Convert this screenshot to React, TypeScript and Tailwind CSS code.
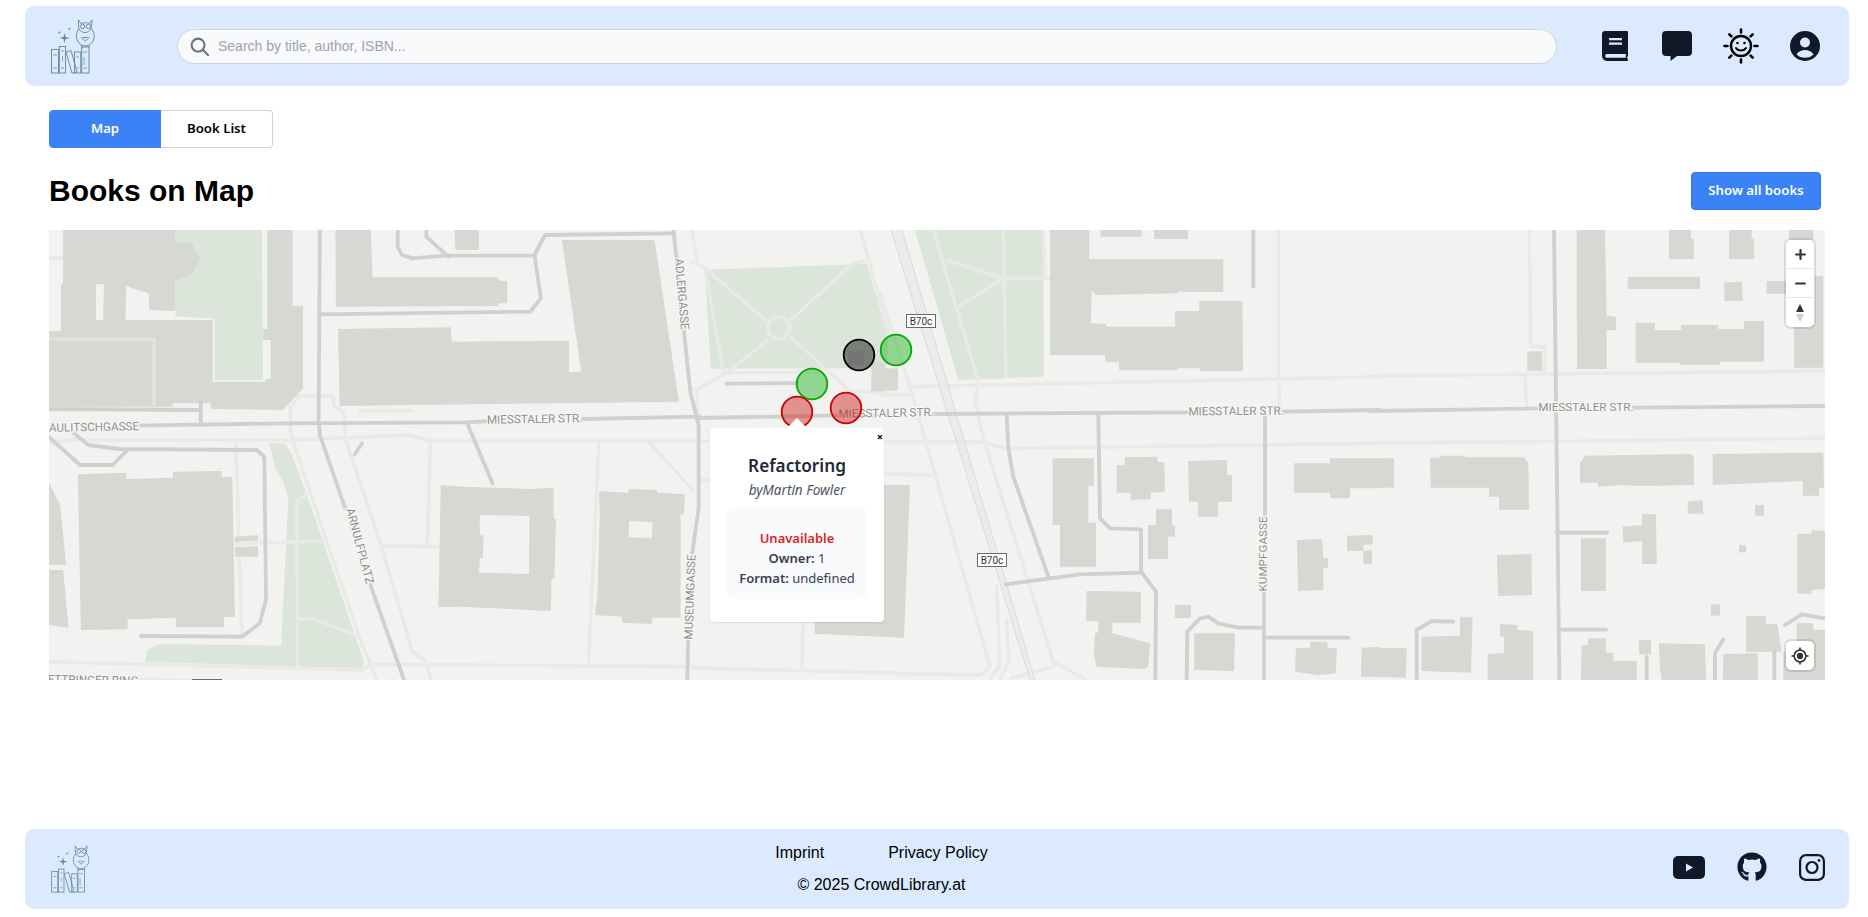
import React from 'react';
import { Plus, Minus } from 'lucide-react';
import { FaGithub } from 'react-icons/fa';

type MapFrame = {
  t: string;
  parks?: string[];
  minor?: string[];
  major?: string[];
  buildings?: string[];
  holes?: string[];
};

// every frame is a part of the map, traced at its own scale
const frames: MapFrame[] = [
  {
    t: 'matrix(0.42088 0 0 0.33333 40 225)',
    parks: [
      '322,15 527,15 530,465 415,465 415,280 322,275',
      '545,655 582,655 597,685 640,830 770,1310 765,1328 610,1325 250,1310 255,1275 285,1257 573,1262 590,820 578,770 560,735',
    ],
    minor: [
      '20,100 55,100',
      '600,540 615,512 695,512 700,545 722,560 725,640 810,960 885,1280 915,1305 930,1365',
      '595,540 595,620 620,720 760,1240 800,1365',
      '20,655 70,645 600,645 875,630 925,648 1568,648',
      '928,648 920,965',
      '808,962 950,965',
      '455,957 680,948',
      '465,650 480,1230',
      '635,805 610,830 612,1330',
      '615,1182 650,1182 755,1235',
      '20,1310 600,1330 765,1335 785,1318 1568,1325',
      '1328,650 1303,1315',
      '1445,650 1555,800',
      '755,557 885,557',
      '230,1362 360,1368',
    ],
    major: [
      '225,602 580,595 1010,592 1070,588',
      '1290,582 1568,575',
      '20,552 380,555',
      '382,530 382,600',
      '665,15 662,580 665,630 725,850',
      '785,1080 865,1365',
      '665,268 1165,260 1190,220 1175,90 1200,30 1505,25',
      '850,15 850,65 860,90 885,100 960,92 1175,92',
      '918,15 918,35 970,95',
      '1505,15 1530,320',
      '1530,320 1545,500 1565,600 1565,850 1548,1000',
      '1540,1240 1538,1365',
      '1015,595 1075,775',
      '80,625 115,660 190,672 515,675 533,695 537,1125 522,1195 480,1235 240,1233',
      '20,635 95,720 172,720 208,675',
      '765,655 748,688',
    ],
    buildings: [
      '55,15 322,15 322,55 360,55 380,100 360,150 322,165 322,258 260,255 258,205 220,190 205,180 203,285 150,285 152,178 133,178 133,285 50,285 50,178 55,178',
      '20,318 50,318 50,285 410,285 410,470 537,470 537,462 548,462 548,345 530,345 530,312 540,312 540,15 600,15 600,242 625,242 625,490 578,555 405,552 405,535 315,535 315,545 20,545',
      '702,15 786,15 790,157 1088,157 1088,165 1110,170 1110,235 1088,235 1088,243 703,245',
      '1240,45 1460,45 1518,530 712,543 708,312 976,307 978,350 1257,348 1257,442 1286,440',
      '985,15 1043,15 1043,75 987,75',
      '90,748 205,743 205,762 316,758 316,740 432,738 432,756 457,756 463,1175 437,1177 437,1207 323,1207 323,1178 208,1183 208,1213 97,1215',
      '20,770 48,840 62,1020 20,1020',
      '20,1035 55,1035 68,1208 20,1200',
      '463,935 518,930 518,947 463,950',
      '463,966 518,964 518,995 463,995',
      '952,780 1005,785 1168,792 1220,788 1220,882 1226,882 1222,1060 1215,1062 1214,1158 1160,1155 1000,1145 946,1146 948,1080',
      '1328,798 1398,803 1398,792 1466,795 1466,803 1532,808 1530,868 1522,868 1522,1178 1455,1178 1453,1197 1383,1193 1383,1175 1318,1170 1325,1105 1330,860',
    ],
    holes: [
      '1045,870 1163,873 1162,1047 1043,1043 1045,1000 1052,1000 1054,932 1045,930',
      '1400,888 1455,892 1454,940 1398,937',
    ],
  },
  {
    t: 'matrix(0.33333 0 0 0.33333 690 228)',
    parks: ['45,125 530,108 595,330 590,420 62,422'],
    minor: [
      '0,100 40,115 230,280',
      '300,278 490,105 530,98',
      '300,325 480,490 600,495',
      '235,335 110,435 20,485 0,480',
      '45,120 100,435 400,432',
      '5,0 22,100',
      '510,0 600,330',
      '20,485 25,600',
    ],
    major: ['110,467 320,465', '20,570 450,562'],
    buildings: ['544,403 583,403 583,490 544,490', '474,366 524,366 524,411 474,411'],
  },
  {
    t: 'matrix(0.33333 0 0 0.33333 880 225)',
    parks: ['105,15 490,15 492,455 235,465'],
    minor: [
      '160,15 295,470 285,530 310,640 520,1310 620,1365',
      '370,15 378,460',
      '200,105 370,160 510,160',
      '235,245 370,160',
      '490,15 495,155',
      '90,485 1500,455',
      '0,650 300,650 380,670 1500,655',
      '1195,15 1195,460 1200,545',
      '0,200 90,485 330,1325 300,1350 0,1345',
      '20,745 155,750',
      '0,510 90,510',
      '525,1325 390,1360',
      '350,1080 360,1320 330,1365',
      '380,1180 385,1310 360,1365',
    ],
    major: [
      '160,567 925,562',
      '1210,560 1500,555',
      '380,567 385,670 400,755 505,1055',
      '655,567 660,880 690,910 783,913 783,1040 828,1100 826,1365',
      '378,1078 600,1048 783,1043',
      '1155,575 1155,875',
      '1152,1100 1152,1365',
      '1120,15 1120,185',
      '1152,1238 1405,1238',
      '920,1365 922,1220 960,1180 985,1175 1015,1195 1075,1208 1150,1208',
    ],
    buildings: [
      '510,15 628,15 628,102 1030,102 1030,200 895,200 895,205 648,210 635,195 633,295 678,297 678,305 885,305 885,258 958,258 958,228 1087,228 1089,438 960,438 960,430 892,430 892,436 718,436 716,410 675,410 675,390 510,390',
      '662,15 785,15 785,35 662,35',
      '822,15 924,15 924,42 822,42',
      '0,430 54,430 54,497 0,497',
      '518,700 642,700 642,783 625,783 625,893 648,893 648,1025 540,1025 540,900 518,900',
      '735,697 833,695 833,712 853,712 855,800 812,803 812,822 752,825 752,803 710,803 710,720 735,720',
      '924,708 1041,705 1041,750 1056,750 1056,830 1014,830 1014,875 954,875 954,830 927,830',
      '828,853 876,853 876,900 885,900 885,935 864,935 864,1002 804,1002 804,900 828,900',
      '1242,715 1350,715 1350,700 1500,700 1500,790 1410,790 1410,820 1350,820 1350,803 1242,803',
      '1251,945 1326,942 1330,1000 1344,1000 1344,1030 1330,1030 1330,1095 1254,1098',
      '1401,932 1478,930 1478,958 1450,960 1450,978 1401,978',
      '1450,978 1476,975 1476,1017 1450,1017',
      '620,1098 783,1100 783,1193 697,1193 697,1225 810,1255 805,1325 793,1332 650,1325 642,1290 645,1225 655,1222 655,1190 618,1187',
      '885,1140 933,1140 933,1179 885,1179',
      '943,1225 1065,1225 1062,1338 943,1335',
      '1290,1250 1342,1250 1342,1268 1371,1270 1367,1345 1315,1350 1245,1340 1248,1270 1290,1268',
      '1445,1268 1500,1266 1500,1357 1443,1355',
      '-196,760 -100,760 -100,780 90,780 72,1238 -196,1226',
    ],
  },
  {
    t: 'matrix(0.33333 0 0 0.33333 1370 225)',
    minor: [
      '0,453 1365,438',
      '0,655 1365,640',
      '478,15 482,365 525,365 525,445',
      '465,450 470,545',
    ],
    major: [
      '0,558 508,550',
      '790,548 1365,543',
      '552,15 568,1365',
      '560,923 712,923',
      '565,1214 708,1214',
      '140,1365 140,1215 185,1188 250,1190',
      '1245,1200 1295,1168 1365,1180',
      '1060,1243 1035,1285 1035,1365',
      '830,1295 830,1365',
      '1213,1280 1213,1365',
    ],
    buildings: [
      '620,15 705,15 710,272 738,275 738,315 710,315 710,432 621,432',
      '897,15 963,15 963,42 972,42 972,102 897,102',
      '1077,15 1145,15 1145,42 1152,42 1152,102 1077,102',
      '1257,15 1330,15 1330,45 1257,45',
      '773,155 990,155 990,192 773,192',
      '1062,172 1116,170 1118,228 1064,228',
      '1190,168 1250,168 1250,207 1190,207',
      '1335,152 1360,152 1360,428 1272,428 1272,300 1335,300',
      '797,293 855,293 855,315 933,315 933,300 1045,300 1045,312 1122,312 1122,288 1182,288 1182,410 1050,410 1050,420 930,420 930,413 797,413',
      '472,380 515,378 518,437 472,437',
      '0,700 72,700 72,788 0,788',
      '180,698 208,698 208,692 285,692 285,697 462,697 475,715 477,855 387,855 387,815 357,815 357,788 182,788',
      '630,715 645,692 965,687 972,700 972,780 810,783 750,780 685,785 683,773 630,773',
      '1028,687 1360,683 1362,788 1347,790 1347,812 1298,812 1298,768 1028,780',
      '953,830 998,825 1000,866 954,866',
      '1155,840 1182,840 1182,872 1155,872',
      '816,867 858,867 860,1017 816,1017 816,948 760,953 758,905 816,900',
      '1107,960 1128,960 1128,982 1107,982',
      '1282,928 1325,925 1325,915 1365,918 1365,1092 1325,1095 1325,1108 1282,1105',
      '633,940 708,940 708,1098 633,1098',
      '381,990 484,987 486,1110 384,1113',
      '1023,1138 1050,1138 1050,1172 1023,1172',
      '1128,1173 1188,1173 1188,1197 1222,1197 1235,1280 1128,1280',
      '807,1245 843,1245 843,1288 807,1288',
      '0,1268 110,1270 108,1358 0,1355',
      '155,1235 270,1232 270,1177 308,1177 303,1343 155,1338',
      '390,1197 443,1200 443,1215 490,1218 490,1365 353,1365 353,1288 402,1285 402,1235 390,1235',
      '635,1260 653,1260 655,1240 708,1240 708,1283 730,1283 730,1308 800,1308 800,1365 633,1365',
      '867,1255 1005,1258 1008,1365 875,1365 870,1330',
      '1060,1287 1164,1285 1164,1365 1058,1365',
      '1280,1195 1330,1195 1330,1215 1365,1215 1365,1365 1240,1365 1240,1280 1280,1280',
    ],
  },
];

const labels = [
  { text: 'AULITSCHGASSE', x: 94, y: 427, r: -1 },
  { text: 'MIESSTALER STR.', x: 534.500, y: 419, r: -1 },
  { text: 'MIESSTALER STR.', x: 886, y: 413, r: -1 },
  { text: 'MIESSTALER STR.', x: 1236, y: 411, r: -0.5 },
  { text: 'MIESSTALER STR.', x: 1586, y: 407, r: 0 },
  { text: 'ADLERGASSE', x: 682, y: 294, r: 85 },
  { text: 'ARNULFPLATZ', x: 360, y: 546, r: 75 },
  { text: 'MUSEUMGASSE', x: 690, y: 597, r: -88 },
  { text: 'KUMPFGASSE', x: 1263, y: 554, r: -90 },
  { text: 'ETTRINGER RING', x: 93, y: 680, r: 1 },
];

const markers = [
  { x: 859, y: 355, stroke: '#000000', fill: 'rgba(0,0,0,0.45)' },
  { x: 896, y: 350, stroke: '#00aa00', fill: 'rgba(0,170,0,0.4)' },
  { x: 812, y: 384, stroke: '#00aa00', fill: 'rgba(0,170,0,0.4)' },
  { x: 797, y: 412, stroke: '#cc0000', fill: 'rgba(204,0,0,0.4)' },
  { x: 846, y: 408, stroke: '#cc0000', fill: 'rgba(204,0,0,0.4)' },
];

const Logo: React.FC<{ className: string }> = ({ className }) => (
  <svg viewBox="10 7 45 55" className={className} fill="none" stroke="#5f8796" strokeWidth="0.9">
    <rect x="11.5" y="37.5" width="7" height="23.5" />
    <rect x="19.3" y="34.5" width="6.3" height="26.5" />
    <path d="M26 40l5-1.500 6 21.500-5 1.200z" />
    <rect x="34.500" y="40" width="6.300" height="21" />
    <rect x="41.700" y="35" width="7.300" height="26" />
    <path d="M13 43h4M13 56h4M21 39h3M21 56h3M36 45h3M36 56h3M43 40h4M43 56h4M22.500 44v5M44 45v8" strokeWidth="0.7" />
    <ellipse cx="45.300" cy="24" rx="9" ry="10" fill="#dbeafe" />
    <path d="M38.500 8l2.500 3.500c3-1 6-1 8.500 0l2.500-3.500-0.500 6c0 4-3 6.500-6.500 6.500s-6.500-2.500-6.500-6.500z" fill="#dbeafe" />
    <circle cx="42.500" cy="14.500" r="2.200" />
    <circle cx="48.500" cy="14.500" r="2.200" />
    <path d="M41 25l4.300 4 4.300-4M43 25.500h4.600M41 33.500l1 2M49.500 33.500l-1 2" />
    <path d="M24.500 21l1 4 4 1-4 1-1 4-1-4-4-1 4-1zM19.300 18.500l.4 1.400 1.400.4-1.400.4-.4 1.400-.4-1.400-1.400-.4 1.400-.4zM29.300 15l.4 1.400 1.400.4-1.400.4-.4 1.400-.4-1.400-1.400-.4 1.400-.4z" fill="#5f8796" stroke="none" />
  </svg>
);

const BookIcon = () => (
  <svg viewBox="0 0 26 30" className="w-[26px] h-[30px]">
    <path d="M3 0h22a1 1 0 0 1 1 1v23c0 1-.8 1.200-.8 2.500s.8 1.500.8 2.500a1 1 0 0 1-1 1H5a5 5 0 0 1-5-5V3a3 3 0 0 1 3-3z" fill="#111827" />
    <rect x="7" y="7" width="13" height="2.200" rx="0.500" fill="#dbeafe" />
    <rect x="7" y="11.500" width="13" height="2.200" rx="0.500" fill="#dbeafe" />
    <path d="M5 23h19c-.4 1.200-.4 2.600 0 3.800H5a1.900 1.900 0 0 1 0-3.800z" fill="#dbeafe" />
  </svg>
);

const ChatIcon = () => (
  <svg viewBox="0 0 30 30" className="w-[30px] h-[30px]">
    <path d="M4 0h22a4 4 0 0 1 4 4v17a4 4 0 0 1-4 4H15l-6.500 5v-5H4a4 4 0 0 1-4-4V4a4 4 0 0 1 4-4z" fill="#111827" />
  </svg>
);

const SunIcon = () => (
  <svg viewBox="0 0 36 36" className="w-9 h-9" fill="none" stroke="#000000" strokeLinecap="round">
    <circle cx="18" cy="18" r="10" strokeWidth="2.400" />
    <path d="M18 1.500v3M18 31.500v3M1.500 18h3M31.500 18h3M6.300 6.300l2.100 2.100M27.600 27.600l2.100 2.100M6.300 29.700l2.100-2.100M27.600 8.400l2.100-2.100" strokeWidth="2.600" />
    <path d="M13 20c2 3.300 8 3.300 10 0" strokeWidth="2" />
    <circle cx="14.500" cy="15" r="1.300" fill="#000000" stroke="none" />
    <circle cx="21.500" cy="15" r="1.300" fill="#000000" stroke="none" />
  </svg>
);

const UserIcon = () => (
  <svg viewBox="0 0 30 30" className="w-[30px] h-[30px]">
    <circle cx="15" cy="15" r="15" fill="#111827" />
    <circle cx="15" cy="11.500" r="5" fill="#dbeafe" />
    <path d="M6.500 23.500c1.500-3 5-4.500 8.500-4.500s7 1.500 8.500 4.500c-2 2-5 3.300-8.500 3.300s-6.500-1.300-8.500-3.300z" fill="#dbeafe" />
  </svg>
);

const YoutubeIcon = () => (
  <svg viewBox="0 0 32 23" className="w-8 h-[23px]">
    <rect width="32" height="23" rx="5" fill="#111827" />
    <path d="M13 7.500l7 4-7 4z" fill="#dbeafe" />
  </svg>
);

const InstagramIcon = () => (
  <svg viewBox="0 0 26 27" className="w-[26px] h-[27px]" fill="none" stroke="#111827" strokeWidth="2.200">
    <rect x="1.100" y="1.100" width="23.800" height="24.800" rx="6" />
    <circle cx="13" cy="13.500" r="5.500" />
    <circle cx="20" cy="6.500" r="1.400" fill="#111827" stroke="none" />
  </svg>
);

const MapDrawing = () => (
  <svg viewBox="49 230 1776 450" className="block w-full h-full" fill="none">
    <rect x="49" y="230" width="1776" height="450" fill="#f2f2f0" />
    {frames.map((f, i) => (
      <g key={i} transform={f.t}>
        {f.parks?.map((p) => <polygon key={p} points={p} fill="#dbe5da" />)}
      </g>
    ))}
    {/* the wide band of the B70c, between its two thin edge lines */}
    <polygon points="891,230 902,230 1035,680 1030,680" fill="#ebebe9" />
    <g stroke="#e9e9e7" strokeWidth="3.500" strokeLinejoin="round">
      {frames.map((f, i) => (
        <g key={i} transform={f.t}>
          {f.minor?.map((p) => (
            <polyline key={p} points={p} vectorEffect="non-scaling-stroke" />
          ))}
        </g>
      ))}
      <polyline points="700,441 880,441" />
      <polyline points="700,480 712,480" />
      <polyline points="884,473 915,476" />
      <polyline points="692,668 900,673" />
      <polyline points="803,622 802,670" />
    </g>
    <circle cx="778.500" cy="328" r="11" fill="#dbe5da" stroke="#e9e9e7" strokeWidth="3.500" />
    <g stroke="#dcdcda" strokeWidth="1">
      <line x1="891" y1="230" x2="1030" y2="680" />
      <line x1="902" y1="230" x2="1035" y2="680" />
    </g>
    {frames.map((f, i) => (
      <g key={i} transform={f.t}>
        {f.buildings?.map((p) => <polygon key={p} points={p} fill="#d6d8d3" />)}
        {f.holes?.map((p) => <polygon key={p} points={p} fill="#f2f2f0" />)}
      </g>
    ))}
    <g stroke="#e3e4e0" strokeWidth="3">
      <polyline points="49,339 154,339 154,406" />
    </g>
    <g stroke="#d0d0ce" strokeWidth="3.800" strokeLinecap="round" strokeLinejoin="round">
      {frames.map((f, i) => (
        <g key={i} transform={f.t}>
          {f.major?.map((p) => (
            <polyline key={p} points={p} vectorEffect="non-scaling-stroke" />
          ))}
        </g>
      ))}
      <polyline points="840,416 880,416" />
    </g>
    <g fontFamily="Roboto, sans-serif" fontSize="11.700" fill="#8f8f8d" stroke="#f7f7f5" strokeWidth="2.500" textAnchor="middle" dominantBaseline="central" paintOrder="stroke">
      {labels.map((l) => (
        <text key={l.text + l.x} x={l.x} y={l.y} transform={`rotate(${l.r} ${l.x} ${l.y})`} paintOrder="stroke">
          {l.text}
        </text>
      ))}
    </g>
    <g fontFamily="Roboto, sans-serif" fontSize="10" textAnchor="middle" dominantBaseline="central">
      {[[906, 314], [977, 553]].map(([x, y]) => (
        <g key={x}>
          <rect x={x + 0.5} y={y + 0.5} width="29" height="13" fill="#ffffff" stroke="#6b6b6b" />
          <text x={x + 15} y={y + 7} fill="#333333">B70c</text>
        </g>
      ))}
      <rect x="192" y="679" width="30" height="2" fill="#6b6b6b" />
    </g>
    {markers.map((m) => (
      <circle key={m.x} cx={m.x} cy={m.y} r="15.300" fill={m.fill} stroke={m.stroke} strokeWidth="1.800" />
    ))}
  </svg>
);

export default function App() {
  return (
    <div className="min-h-screen flex flex-col bg-white font-['Liberation_Sans',Arial,sans-serif] text-black">
      <header className="ml-[25px] mr-[19px] mt-[6px] h-20 shrink-0 flex items-center pl-[25px] pr-[26px] bg-[#dbeafe] rounded-[9px]">
        <Logo className="w-[45px] h-[55px] shrink-0" />
        <div className="flex-1 ml-[82px] mr-[38px] h-[35px] flex items-center gap-[9px] pl-3 bg-[#f9fafb] border border-[#d1d5db] rounded-full">
          <svg viewBox="0 0 20 20" className="w-[19px] h-[19px] shrink-0" fill="none" stroke="#6b7280" strokeWidth="2.200" strokeLinecap="round">
            <circle cx="8.500" cy="8.500" r="6.800" />
            <path d="M13.500 13.500l5.500 5.500" />
          </svg>
          <input
            placeholder="Search by title, author, ISBN..."
            className="flex-1 bg-transparent outline-none text-sm placeholder:text-[#9ca3af]"
          />
        </div>
        <div className="flex items-center gap-7">
          <div className="w-9 flex justify-center pl-[3px]"><BookIcon /></div>
          <div className="w-9 flex justify-center"><ChatIcon /></div>
          <div className="w-9 flex justify-center"><SunIcon /></div>
          <div className="w-9 flex justify-center"><UserIcon /></div>
        </div>
      </header>

      <main className="pl-[49px] pr-[43px] pt-6 flex-1">
        <div className="flex font-['Noto_Sans',sans-serif] text-[13.200px] font-semibold">
          <button className="w-28 h-[38px] bg-[#3b82f6] text-white rounded-l border border-[#3b82f6]">Map</button>
          <button className="w-28 h-[38px] bg-white text-black rounded-r border border-[#d1d5db] border-l-0">Book List</button>
        </div>
        <div className="flex items-center justify-between mt-6 mb-5 pr-1">
          <h1 className="text-3xl font-bold">Books on Map</h1>
          <button className="w-[130px] h-[38px] bg-[#3b82f6] text-white rounded border border-[#2f74e6] font-['Noto_Sans',sans-serif] text-[13.200px] font-semibold">
            Show all books
          </button>
        </div>

        <div className="relative w-full h-[450px] overflow-hidden">
          <MapDrawing />

          <div className="absolute left-[661px] top-[198px] w-[174px] h-[194px] bg-white rounded shadow-[0_1px_2px_rgba(0,0,0,0.1)] font-['Noto_Sans',sans-serif] text-center">
            <div className="absolute left-[77px] top-[-10px] w-0 h-0 border-x-[10px] border-x-transparent border-b-[10px] border-b-white" />
            <span className="absolute right-[1px] top-[2px] text-[11px] leading-[14px] font-bold">×</span>
            <h3 className="pt-[26px] text-[17.200px] leading-6 font-semibold text-[#1f2937]">Refactoring</h3>
            <p className="mt-[2px] text-[13.500px] leading-5 italic text-[#4b5563]">byMartin Fowler</p>
            <div className="mx-[17px] mt-[7px] pt-[21px] h-[92px] bg-[#f9fafb] rounded-lg text-[13px] leading-5 text-[#374151]">
              <p className="font-semibold text-[#dc2626]">Unavailable</p>
              <p><span className="font-semibold">Owner:</span> 1</p>
              <p className="whitespace-nowrap"><span className="font-semibold">Format:</span> undefined</p>
            </div>
          </div>

          <div className="absolute right-[11px] top-[10px] w-[28px] bg-white rounded-[5px] shadow-[0_0_0_2px_rgba(0,0,0,0.1)] flex flex-col items-center">
            <div className="h-[29px] w-full flex items-center justify-center border-b border-[#e5e7eb]"><Plus size={15} strokeWidth={3.5} color="#333333" /></div>
            <div className="h-[29px] w-full flex items-center justify-center border-b border-[#e5e7eb]"><Minus size={15} strokeWidth={3.5} color="#333333" /></div>
            <div className="h-[29px] w-full flex items-center justify-center">
              <svg viewBox="0 0 10 20" className="w-[10px] h-5">
                <path d="M5 1l4 8H1z" fill="#333333" />
                <path d="M5 19l4-8H1z" fill="#cccccc" />
              </svg>
            </div>
          </div>

          <div className="absolute right-[11px] bottom-[10px] w-[28px] h-[29px] bg-white rounded-[5px] shadow-[0_0_0_2px_rgba(0,0,0,0.1)] flex items-center justify-center">
            <svg viewBox="0 0 20 20" className="w-[18px] h-[18px]" fill="none" stroke="#333333" strokeWidth="1.800">
              <circle cx="10" cy="10" r="6.500" />
              <circle cx="10" cy="10" r="3.500" fill="#333333" stroke="none" />
              <path d="M10 0.500v3M10 16.500v3M0.500 10h3M16.500 10h3" />
            </svg>
          </div>
        </div>
      </main>

      <footer className="ml-[25px] mr-[19px] mb-2 h-20 shrink-0 flex items-center justify-between pl-[25px] pr-6 bg-[#dbeafe] rounded-[9px]">
        <Logo className="w-[40px] h-[48px]" />
        <div className="flex flex-col items-center gap-2">
          <div className="flex gap-16">
            <a>Imprint</a>
            <a>Privacy Policy</a>
          </div>
          <p>© 2025 CrowdLibrary.at</p>
        </div>
        <div className="w-[152px] pb-1 flex items-center justify-between">
          <YoutubeIcon />
          <FaGithub size={30} color="#111827" />
          <InstagramIcon />
        </div>
      </footer>
    </div>
  );
}
